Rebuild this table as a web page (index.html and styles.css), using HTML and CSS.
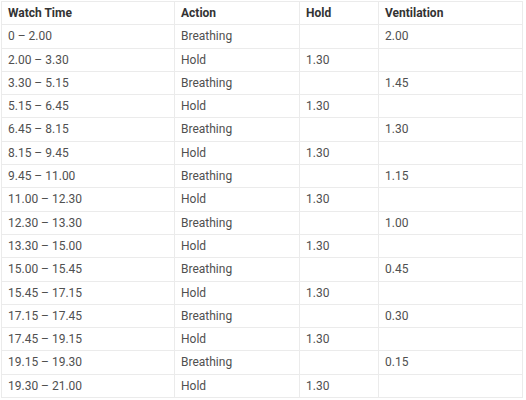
FILE: index.html
```html
<!DOCTYPE html>
<html>
<head>
<meta charset="utf-8">
<link rel="stylesheet" href="styles.css">
</head>
<body>
<table class="schedule">
  <colgroup>
    <col class="c1"><col class="c2"><col class="c3"><col class="c4">
  </colgroup>
  <thead>
    <tr><th>Watch Time</th><th>Action</th><th>Hold</th><th>Ventilation</th></tr>
  </thead>
  <tbody>
    <tr><td>0 – 2.00</td><td>Breathing</td><td></td><td>2.00</td></tr>
    <tr><td>2.00 – 3.30</td><td>Hold</td><td>1.30</td><td></td></tr>
    <tr><td>3.30 – 5.15</td><td>Breathing</td><td></td><td>1.45</td></tr>
    <tr><td>5.15 – 6.45</td><td>Hold</td><td>1.30</td><td></td></tr>
    <tr><td>6.45 – 8.15</td><td>Breathing</td><td></td><td>1.30</td></tr>
    <tr><td>8.15 – 9.45</td><td>Hold</td><td>1.30</td><td></td></tr>
    <tr><td>9.45 – 11.00</td><td>Breathing</td><td></td><td>1.15</td></tr>
    <tr><td>11.00 – 12.30</td><td>Hold</td><td>1.30</td><td></td></tr>
    <tr><td>12.30 – 13.30</td><td>Breathing</td><td></td><td>1.00</td></tr>
    <tr><td>13.30 – 15.00</td><td>Hold</td><td>1.30</td><td></td></tr>
    <tr><td>15.00 – 15.45</td><td>Breathing</td><td></td><td>0.45</td></tr>
    <tr><td>15.45 – 17.15</td><td>Hold</td><td>1.30</td><td></td></tr>
    <tr><td>17.15 – 17.45</td><td>Breathing</td><td></td><td>0.30</td></tr>
    <tr><td>17.45 – 19.15</td><td>Hold</td><td>1.30</td><td></td></tr>
    <tr><td>19.15 – 19.30</td><td>Breathing</td><td></td><td>0.15</td></tr>
    <tr><td>19.30 – 21.00</td><td>Hold</td><td>1.30</td><td></td></tr>
  </tbody>
</table>
</body>
</html>
```
FILE: styles.css
```css
html, body {
  margin: 0;
  padding: 0;
  background: #fff;
}
body {
  font-family: Roboto, "Liberation Sans", sans-serif;
  font-size: 12px;
  color: #505050;
}
.schedule {
  border-collapse: collapse;
  margin: 1px 0 0 1px;
  width: 521px;
  table-layout: fixed;
}
.c1 { width: 173px; }
.c2 { width: 125px; }
.c3 { width: 79px; }
.c4 { width: 144px; }
.schedule th,
.schedule td {
  border: 1px solid #ebebeb;
  padding: 3px 6px;
  height: 16.3px;
  line-height: 16.3px;
  text-align: left;
  vertical-align: middle;
}
.schedule th {
  font-weight: 700;
  color: #333;
}
```
